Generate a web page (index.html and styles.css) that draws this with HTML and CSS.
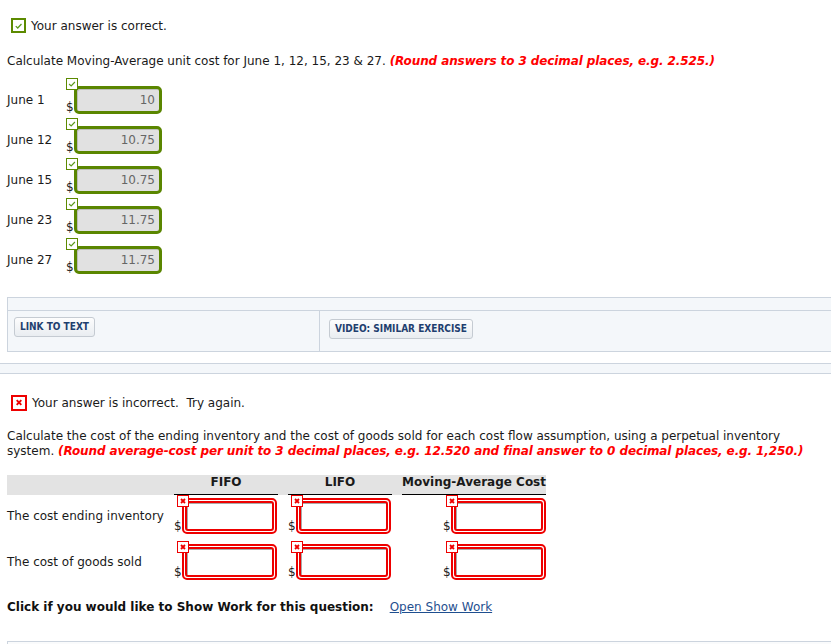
FILE: index.html
```html
<!DOCTYPE html>
<html>
<head>
<meta charset="utf-8">
<link rel="stylesheet" href="styles.css">
</head>
<body>
<div class="part">
  <div class="status">
    <span class="ico ico-ok"><svg viewBox="0 0 14 14" width="14" height="14"><path d="M3.5 7.2 L6 9.6 L10.8 4.4" fill="none" stroke="#5c9a1c" stroke-width="1.6"/></svg></span>
    <span>Your answer is correct.</span>
  </div>
  <p class="q">Calculate Moving-Average unit cost for June 1, 12, 15, 23 &amp; 27. <em class="hint">(Round answers to 3 decimal places, e.g. 2.525.)</em></p>

  <div class="rows">
    <div class="row"><span class="lbl">June 1</span><span class="field"><span class="badge ok"><svg viewBox="0 0 12 12" width="10" height="10"><path d="M2.5 6 L5 8.2 L9.5 3.6" fill="none" stroke="#5c9a1c" stroke-width="1.4"/></svg></span><span class="dollar">$</span><span class="inp-ok">10</span></span></div>
    <div class="row"><span class="lbl">June 12</span><span class="field"><span class="badge ok"><svg viewBox="0 0 12 12" width="10" height="10"><path d="M2.5 6 L5 8.2 L9.5 3.6" fill="none" stroke="#5c9a1c" stroke-width="1.4"/></svg></span><span class="dollar">$</span><span class="inp-ok">10.75</span></span></div>
    <div class="row"><span class="lbl">June 15</span><span class="field"><span class="badge ok"><svg viewBox="0 0 12 12" width="10" height="10"><path d="M2.5 6 L5 8.2 L9.5 3.6" fill="none" stroke="#5c9a1c" stroke-width="1.4"/></svg></span><span class="dollar">$</span><span class="inp-ok">10.75</span></span></div>
    <div class="row"><span class="lbl">June 23</span><span class="field"><span class="badge ok"><svg viewBox="0 0 12 12" width="10" height="10"><path d="M2.5 6 L5 8.2 L9.5 3.6" fill="none" stroke="#5c9a1c" stroke-width="1.4"/></svg></span><span class="dollar">$</span><span class="inp-ok">11.75</span></span></div>
    <div class="row"><span class="lbl">June 27</span><span class="field"><span class="badge ok"><svg viewBox="0 0 12 12" width="10" height="10"><path d="M2.5 6 L5 8.2 L9.5 3.6" fill="none" stroke="#5c9a1c" stroke-width="1.4"/></svg></span><span class="dollar">$</span><span class="inp-ok">11.75</span></span></div>
  </div>

  <div class="panel">
    <div class="panel-head"></div>
    <div class="panel-body">
      <div class="cell cell-a"><span class="btn">LINK TO TEXT</span></div>
      <div class="cell cell-b"><span class="btn">VIDEO: SIMILAR EXERCISE</span></div>
    </div>
  </div>
</div>

<div class="sep"></div>

<div class="part part2">
  <div class="status">
    <span class="ico ico-bad"><svg viewBox="0 0 14 14" width="13" height="13"><path d="M4.3 4.3 L9.7 9.7 M9.7 4.3 L4.3 9.7" stroke="#e00" stroke-width="2.2"/></svg></span>
    <span>Your answer is incorrect.&nbsp; Try again.</span>
  </div>
  <p class="q q2">Calculate the cost of the ending inventory and the cost of goods sold for each cost flow assumption, using a perpetual inventory system. <em class="hint">(Round average-cost per unit to 3 decimal places, e.g. 12.520 and final answer to 0 decimal places, e.g. 1,250.)</em></p>

  <div class="tbl">
    <div class="th th-lbl"></div>
    <div class="th th-col">FIFO</div>
    <div class="th th-gap"></div>
    <div class="th th-col">LIFO</div>
    <div class="th th-gap"></div>
    <div class="th th-col th-ma">Moving-Average Cost</div>

    <div class="td-lbl">The cost ending inventory</div>
    <div class="td"><span class="rfield"><span class="badge bad"><svg viewBox="0 0 10 10" width="10" height="10"><path d="M3 3 L7 7 M7 3 L3 7" stroke="#e00" stroke-width="1.8"/></svg></span><span class="dollar">$</span><span class="inp-bad"><span></span></span></span></div>
    <div></div>
    <div class="td"><span class="rfield"><span class="badge bad"><svg viewBox="0 0 10 10" width="10" height="10"><path d="M3 3 L7 7 M7 3 L3 7" stroke="#e00" stroke-width="1.8"/></svg></span><span class="dollar">$</span><span class="inp-bad"><span></span></span></span></div>
    <div></div>
    <div class="td td-ma"><span class="rfield"><span class="badge bad"><svg viewBox="0 0 10 10" width="10" height="10"><path d="M3 3 L7 7 M7 3 L3 7" stroke="#e00" stroke-width="1.8"/></svg></span><span class="dollar">$</span><span class="inp-bad"><span></span></span></span></div>

    <div class="td-lbl">The cost of goods sold</div>
    <div class="td"><span class="rfield"><span class="badge bad"><svg viewBox="0 0 10 10" width="10" height="10"><path d="M3 3 L7 7 M7 3 L3 7" stroke="#e00" stroke-width="1.8"/></svg></span><span class="dollar">$</span><span class="inp-bad"><span></span></span></span></div>
    <div></div>
    <div class="td"><span class="rfield"><span class="badge bad"><svg viewBox="0 0 10 10" width="10" height="10"><path d="M3 3 L7 7 M7 3 L3 7" stroke="#e00" stroke-width="1.8"/></svg></span><span class="dollar">$</span><span class="inp-bad"><span></span></span></span></div>
    <div></div>
    <div class="td td-ma"><span class="rfield"><span class="badge bad"><svg viewBox="0 0 10 10" width="10" height="10"><path d="M3 3 L7 7 M7 3 L3 7" stroke="#e00" stroke-width="1.8"/></svg></span><span class="dollar">$</span><span class="inp-bad"><span></span></span></span></div>
  </div>

  <div class="showwork"><b>Click if you would like to Show Work for this question:</b><a class="link" href="#">Open Show Work</a></div>

  <div class="bottom-box"></div>
</div>
</body>
</html>
```

FILE: styles.css
```css
html, body { margin: 0; padding: 0; overflow: hidden; }
body {
  width: 831px;
  height: 644px;
  font-family: "DejaVu Sans", Verdana, sans-serif;
  font-size: 12px;
  color: #1a1a1a;
  background: #fff;
}
.part { padding: 18px 0 0 7px; }
.status { display: flex; align-items: center; gap: 5px; height: 15px; padding-left: 4px; }
.ico {
  width: 15px; height: 15px; box-sizing: border-box;
  display: inline-flex; align-items: center; justify-content: center;
  background: #fff;
}
.ico svg { display: block; }
.ico-ok { border: 2px solid #5c8a00; }
.ico-bad { border: 2px solid #e00; width: 16px; height: 16px; }
.q { margin: 21px 0 0; line-height: 15px; }
.hint { color: #f00; font-weight: bold; font-style: italic; letter-spacing: -0.1px; }

.rows { margin-top: 9px; display: flex; flex-direction: column; gap: 4px; }
.row { display: flex; align-items: center; height: 36px; }
.lbl { width: 59px; padding-top: 8px; }
.field { position: relative; width: 96px; height: 36px; display: block; }
.badge {
  position: absolute; left: 0; top: 0; z-index: 2;
  width: 12px; height: 12px; box-sizing: border-box;
  background: #fff; display: flex; align-items: center; justify-content: center;
}
.badge svg { display: block; }
.badge.ok { border: 1px solid #5c8a00; }
.badge.bad { border: 1px solid #e00; }
.dollar { position: absolute; left: 0; bottom: 0; font-size: 12px; line-height: 14px; color: #1a1a1a; }
.inp-ok {
  position: absolute; left: 8px; top: 8px;
  width: 88px; height: 28px; box-sizing: border-box;
  border: 3px solid #5a8600; border-radius: 5px;
  background: #e1e1e1;
  box-shadow: inset 1px 1px 0 #bdbdbd;
  text-align: right; padding-right: 4px;
  line-height: 22px; color: #666;
}

.panel {
  margin-top: 23px;
  border: 1px solid #ccd4de; border-right: none;
  background: #f4f7fa;
}
.panel-head { height: 12px; border-bottom: 1px solid #ccd4de; }
.panel-body { display: flex; height: 40px; }
.cell-a { width: 312px; border-right: 1px solid #ccd4de; padding: 6px 0 0 6px; box-sizing: border-box; }
.cell-b { padding: 8px 0 0 9px; }
.btn {
  display: inline-block;
  font-family: "Liberation Sans Narrow", "DejaVu Sans Condensed", "Liberation Sans", sans-serif;
  font-weight: bold; font-size: 10px; color: #1f3f6f;
  padding: 0 5px; height: 18px; line-height: 18px;
  border: 1px solid #c5cbd2; border-radius: 3px;
  background: linear-gradient(#fdfdfd, #e9edf1);
}

.sep {
  margin-top: 11px; height: 9px;
  border-top: 1px solid #ccd4de; border-bottom: 1px solid #ccd4de;
  background: #f4f7fa;
}
.part2 { padding-top: 21px; }
.q2 { margin-top: 19px; }

.tbl {
  margin-top: 16px;
  display: grid;
  grid-template-columns: 167px 104px 10px 104px 10px 144px;
  grid-template-rows: 20px 46px 46px;
  width: 539px;
}
.th { background: #e3e3e3; font-weight: bold; text-align: center; line-height: 15px; }
.th-col { border-bottom: 1px solid #000; }
.th-ma { text-align: right; }
.td-lbl { display: flex; align-items: center; padding-bottom: 4px; }
.td { position: relative; }
.td-ma { display: flex; justify-content: flex-end; }
.rfield { position: relative; display: block; width: 103px; height: 39px; }
.rfield .badge { left: 3px; }
.rfield .dollar { bottom: 1px; }
.inp-bad {
  position: absolute; left: 8px; top: 3px;
  width: 95px; height: 36px; box-sizing: border-box;
  border: 2px solid #e00; border-radius: 5px;
  padding: 1px; background: #fff;
}
.inp-bad span {
  display: block; height: 100%; box-sizing: border-box;
  border: 2px solid #e00; border-radius: 3px;
  box-shadow: inset 1px 1px 0 #aaa;
}

.showwork { margin-top: 13px; line-height: 15px; }
.showwork b { color: #111; }
.link { color: #1f4f8f; margin-left: 16px; }
.bottom-box { margin-top: 26px; border-top: 1px solid #ccd4de; border-left: 1px solid #ccd4de; height: 10px; background: #fafbfc; }
```
